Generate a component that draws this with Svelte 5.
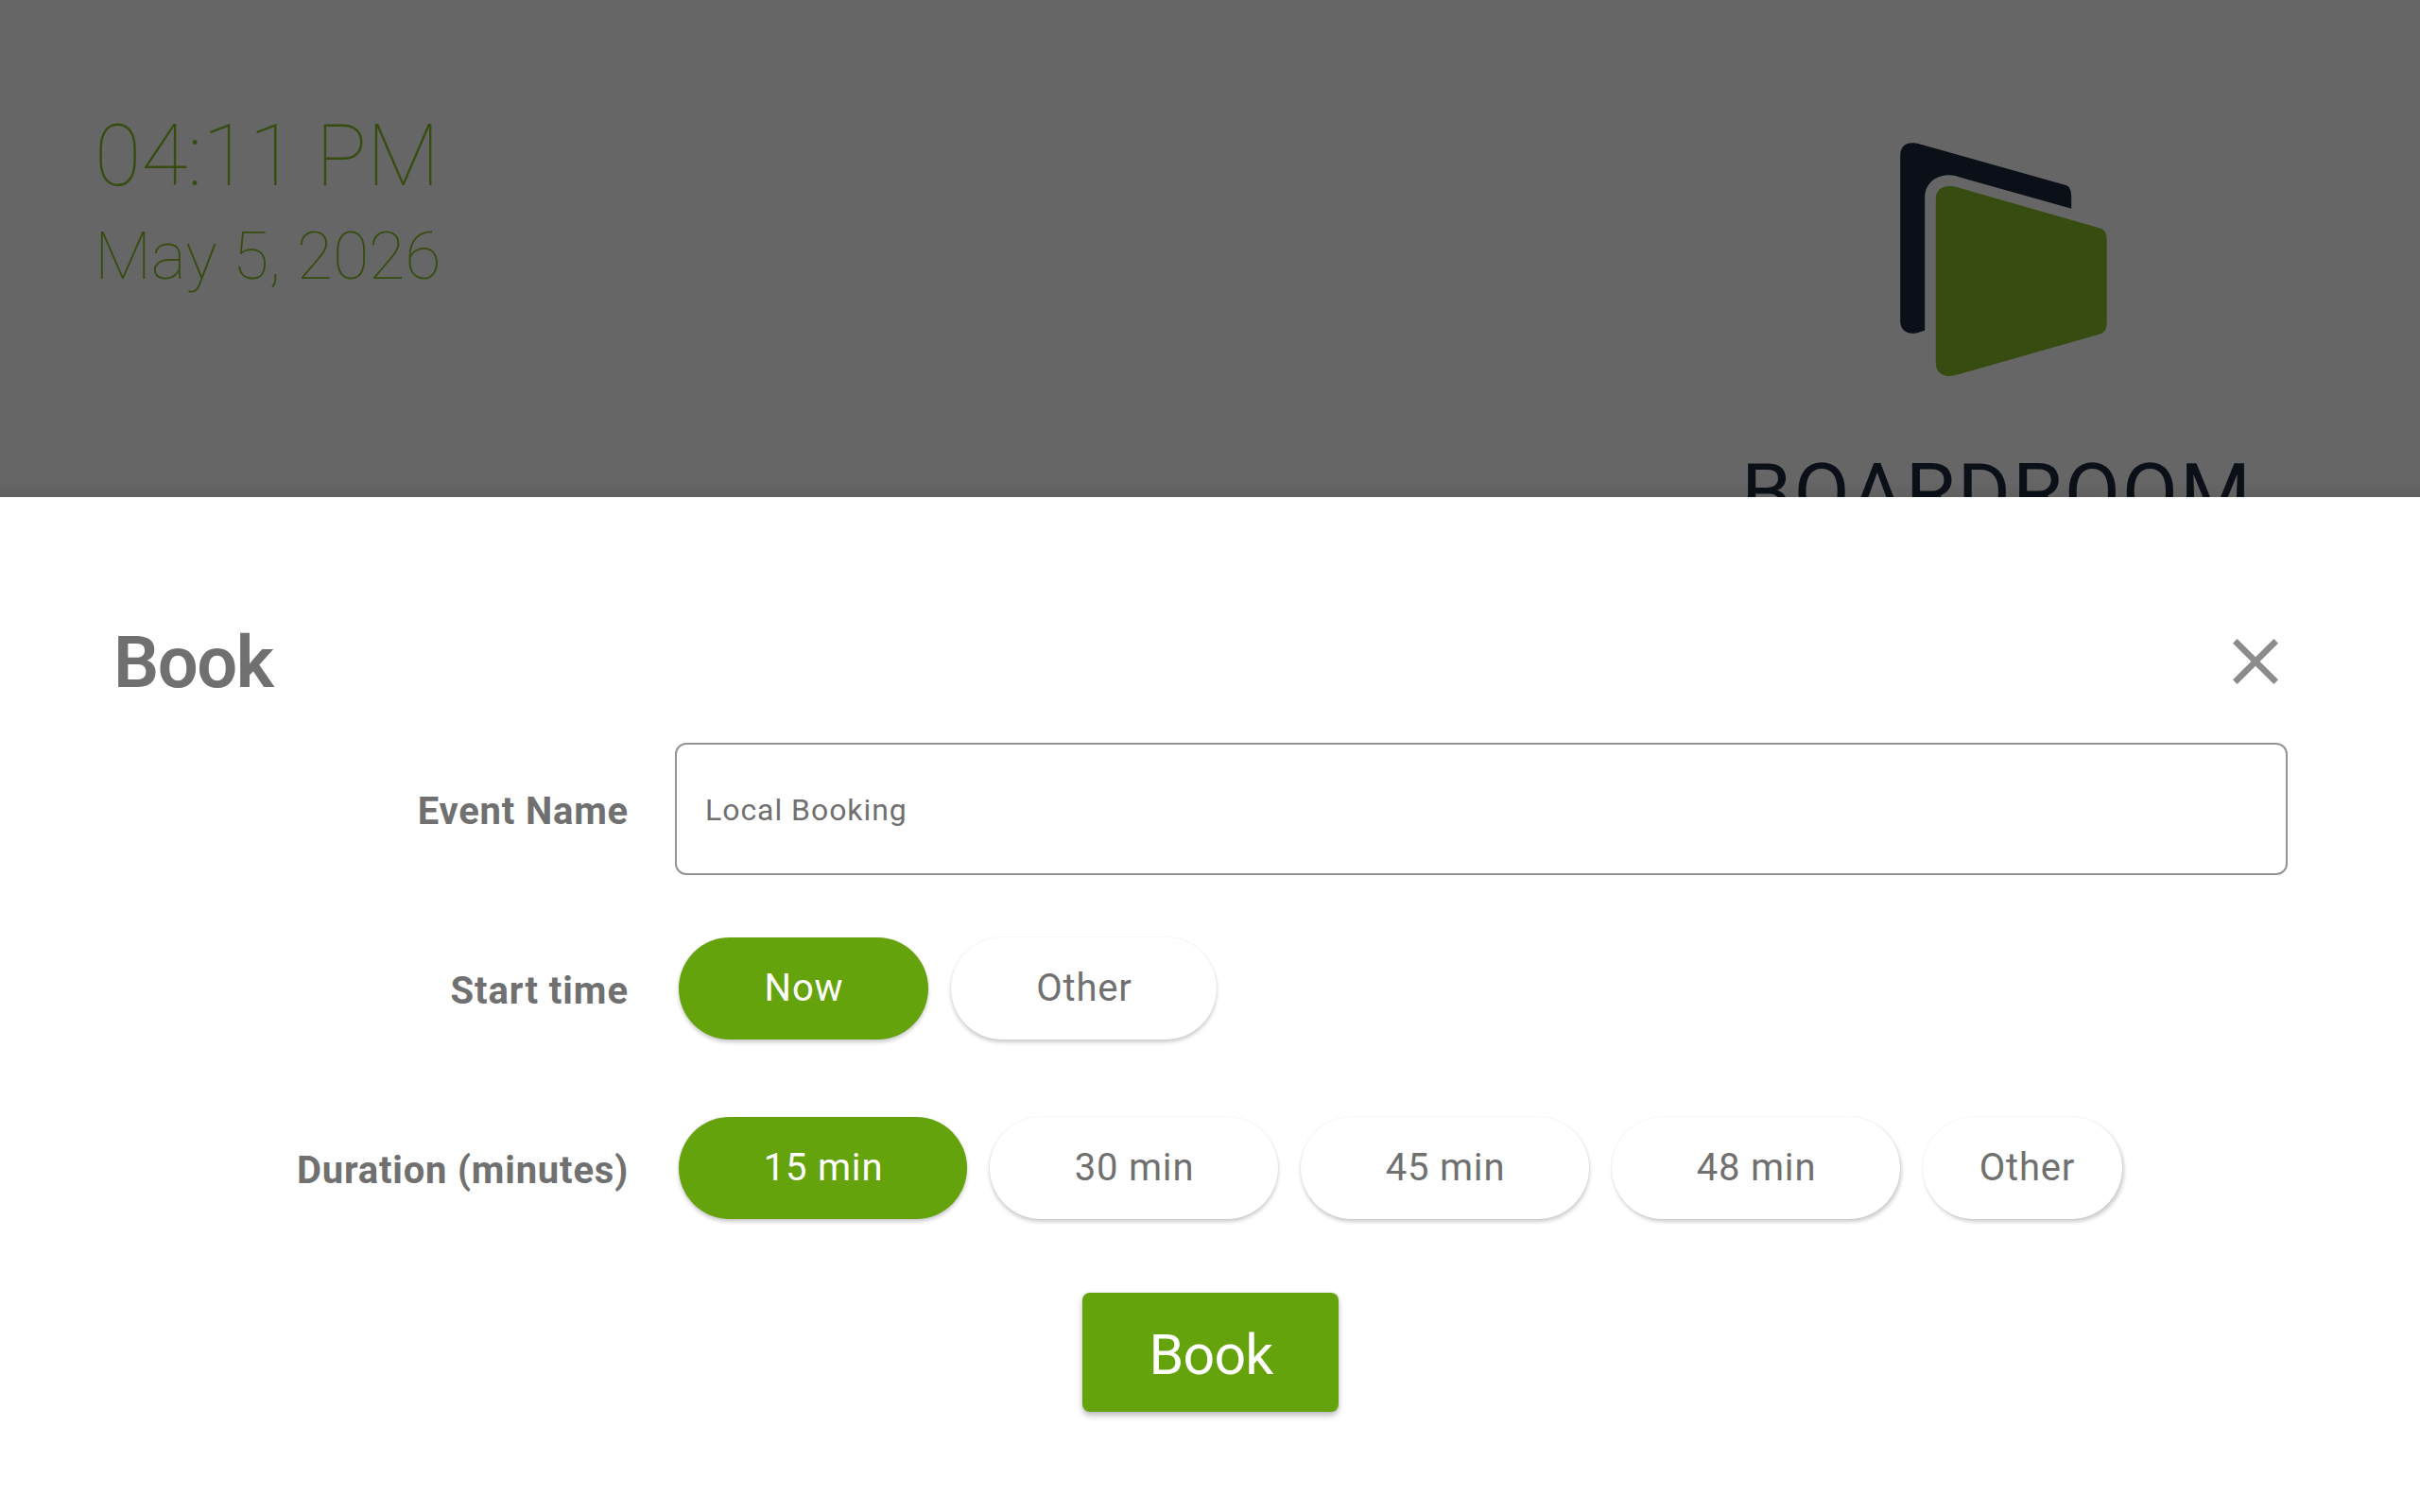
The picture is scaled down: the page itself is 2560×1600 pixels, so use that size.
<script>
  let start = $state('Now');
  let duration = $state('15 min');
  let eventName = $state('Local Booking');

  const startOptions = ['Now', 'Other'];
  const durationOptions = [
    { label: '15 min', drift: 0 },
    { label: '30 min', drift: 0 },
    { label: '45 min', drift: 0.5 },
    { label: '48 min', drift: 1.5 },
    { label: 'Other', drift: 2, compact: true }
  ];
</script>

<div class="screen">
  <header class="backdrop">
    <div class="clock">
      <div class="time">04:11 PM</div>
      <div class="date">May 5, 2026</div>
    </div>
    <div class="brand">
      <svg class="mark" viewBox="2010 151 219 247" aria-hidden="true">
        <path class="mark-dark" d="M2010.2 164C2010.2 155.500 2015.500 151.200 2022.500 151.200C2025.500 151.200 2027.500 151.500 2030 152.300L2185.500 196C2189.500 197.300 2191.200 202 2191.200 208V220.700L2072 187.200C2068.500 186 2065.500 185.300 2061.900 185.300C2047 185.300 2036.200 195 2036.200 209V349.700L2029 351.900C2027 352.500 2025 352.700 2022.800 352.700C2015.500 352.700 2010.200 348 2010.200 340Z" />
        <path class="mark-green" d="M2047.800 210.500C2047.800 202 2053.500 197.100 2061.500 197.100C2065 197.100 2068 197.500 2070.700 198.300L2221.500 241.500C2227 243.200 2228.700 247.500 2228.700 254.500V340.500C2228.700 347.500 2227 351.800 2221.500 353.500L2070.700 396.500C2068 397.400 2065 397.900 2061.500 397.900C2053.500 397.900 2047.800 392.500 2047.800 384.500Z" />
      </svg>
      <div class="wordmark">BOARDROOM</div>
    </div>
    <div class="scrim"></div>
  </header>

  <main class="sheet">
    <div class="title-row">
      <h1>Book</h1>
      <button class="close" aria-label="Close">
        <svg viewBox="5 5 14 14"><path d="M19 6.350L17.650 5 12 10.650 6.350 5 5 6.350 10.650 12 5 17.650 6.350 19 12 13.350 17.650 19 19 17.650 13.350 12z" /></svg>
      </button>
    </div>

    <div class="form">
      <div class="row name-row">
        <label for="event-name">Event Name</label>
        <input id="event-name" bind:value={eventName} />
      </div>
      <div class="row start-row">
        <span class="label start-label">Start time</span>
        <div class="pills">
          {#each startOptions as option}
            <button class="pill" class:selected={start === option} class:short={option === 'Now'} class:wide={option === 'Other'} onclick={() => (start = option)}>{option}</button>
          {/each}
        </div>
      </div>
      <div class="row duration-row">
        <span class="label">Duration (minutes)</span>
        <div class="pills">
          {#each durationOptions as option}
            <button
              class="pill"
              class:selected={duration === option.label}
              class:compact={option.compact}
              style:--drift="{option.drift}px"
              onclick={() => (duration = option.label)}>{option.label}</button>
          {/each}
        </div>
      </div>
    </div>

    <button class="submit">Book</button>
  </main>
</div>

<style>
  :global(body) {
    margin: 0;
    background: #fff;
  }
  .screen {
    display: flex;
    flex-direction: column;
    width: 2560px;
    height: 1600px;
    overflow: hidden;
    font-family: Roboto, "Liberation Sans", sans-serif;
    color: #707070;
  }
  .backdrop {
    position: relative;
    display: flex;
    justify-content: space-between;
    box-sizing: border-box;
    height: 526px;
    padding: 111px 180px 0 100px;
    overflow: hidden;
    background: #fff;
  }
  .clock {
    padding-top: 2px;
    font-weight: 100;
    color: #87be28;
    white-space: nowrap;
  }
  .time {
    font-size: 90px;
    line-height: 106px;
    letter-spacing: -0.1px;
  }
  .date {
    margin-top: 11px;
    font-size: 70px;
    line-height: 82px;
    letter-spacing: -0.15px;
  }
  .brand {
    display: flex;
    flex-direction: column;
    align-items: center;
    width: 538px;
    padding-top: 40px;
  }
  .mark {
    display: block;
    width: 219px;
    height: 247px;
    margin-left: 16px;
    overflow: visible;
  }
  .mark-dark {
    fill: #1c283c;
  }
  .mark-green {
    fill: #87be28;
  }
  .wordmark {
    align-self: flex-start;
    margin-top: 74px;
    font-size: 86px;
    font-weight: 440;
    line-height: 100px;
    letter-spacing: 1.9px;
    color: #1c283c;
    white-space: nowrap;
  }
  .scrim {
    position: absolute;
    inset: 0;
    background: linear-gradient(to top, rgba(0, 0, 0, 0.06), transparent 18px), rgba(0, 0, 0, 0.6);
  }
  .sheet {
    display: flex;
    flex-direction: column;
    box-sizing: border-box;
    height: 1074px;
    padding: 130px 140px 0 120px;
    background: #fff;
  }
  .title-row {
    display: flex;
    align-items: center;
    justify-content: space-between;
    height: 88px;
    padding-right: 10px;
  }
  h1 {
    margin: 0;
    padding-top: 2px;
    font-size: 76px;
    line-height: 88px;
    font-weight: 600;
    letter-spacing: -1.5px;
  }
  button {
    border: 0;
    padding: 0;
    font-family: inherit;
    cursor: pointer;
  }
  .close {
    display: flex;
    background: none;
  }
  .close svg {
    width: 48px;
    height: 48px;
    fill: #8c8c8c;
  }
  .form {
    display: flex;
    flex-direction: column;
    margin-top: 42px;
  }
  .row {
    display: grid;
    grid-template-columns: 545px 1fr;
    align-items: center;
    column-gap: 49px;
  }
  label,
  .label {
    font-size: 40px;
    font-weight: 700;
    line-height: 48px;
    letter-spacing: 0.8px;
    text-align: right;
    padding-top: 6px;
  }
  .start-label {
    letter-spacing: 0.95px;
  }
  input {
    box-sizing: border-box;
    width: 1706px;
    height: 140px;
    padding: 2px 30px 0;
    border: 2px solid #949494;
    border-radius: 12px;
    outline: 0;
    background: #fff;
    color: #707070;
    font-family: inherit;
    font-size: 32px;
    letter-spacing: 0.95px;
  }
  .pills {
    display: flex;
    gap: 24px;
    padding-left: 4px;
  }
  .start-row {
    margin-top: 66px;
  }
  .duration-row {
    margin-top: 82px;
  }
  .pill {
    width: 305px;
    height: 108px;
    padding: 0 0 2px 1px;
    border-radius: 54px;
    background: #fff;
    color: #707070;
    font-size: 40px;
    letter-spacing: 0.8px;
    box-shadow: var(--drift, 0) 3px 4px rgba(0, 0, 0, 0.2), 0 0 2px rgba(0, 0, 0, 0.08);
  }
  .short {
    width: 264px;
  }
  .wide {
    width: 281px;
  }
  .compact {
    width: 211px;
    padding-left: 10px;
  }
  .selected {
    background: #65a30d;
    color: #fff;
  }
  .submit {
    align-self: center;
    width: 271px;
    height: 126px;
    margin: 78px 0 0 21px;
    padding: 5px 0 0 1px;
    border-radius: 8px;
    background: #65a30d;
    color: #fff;
    font-size: 59px;
    letter-spacing: -0.8px;
    box-shadow: 0 4px 6px rgba(0, 0, 0, 0.25), 0 0 3px rgba(0, 0, 0, 0.1);
  }
</style>
